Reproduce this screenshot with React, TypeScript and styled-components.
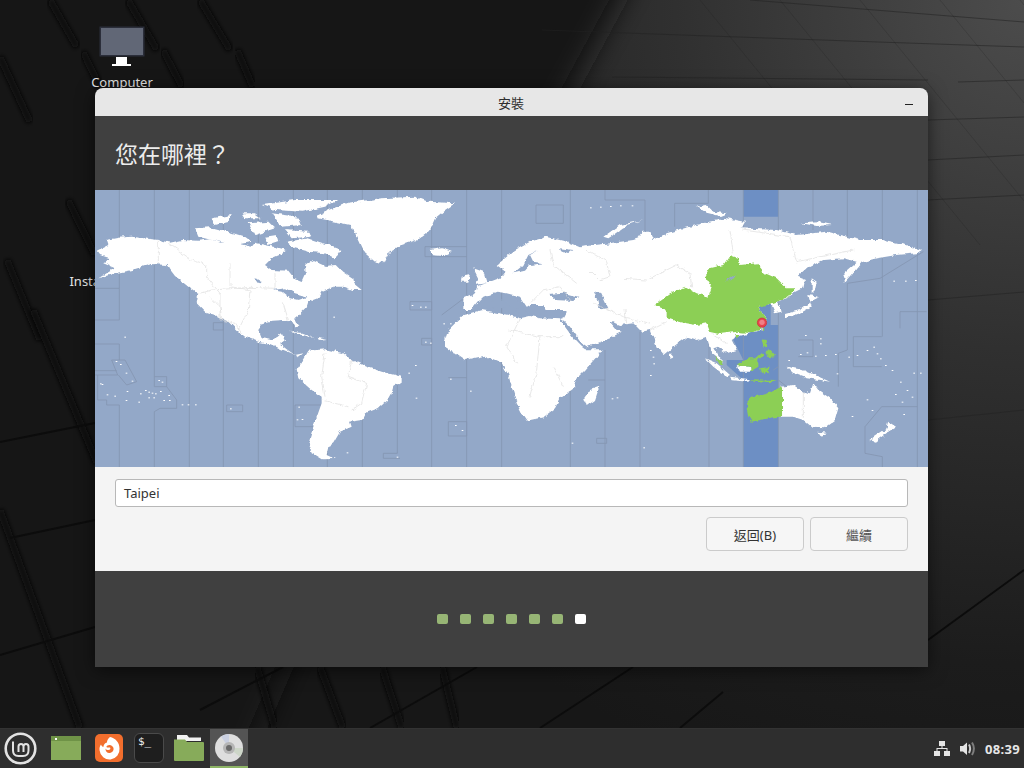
import styled, { createGlobalStyle } from "styled-components";

const GlobalStyle = createGlobalStyle`
  html, body {
    margin: 0;
    height: 100%;
    overflow: hidden;
    background: #111;
    font-family: "Noto Sans", "Noto Sans CJK TC", sans-serif;
  }
`;

const Screen = styled.div`
  display: flex;
  flex-direction: column;
  width: 1024px;
  height: 768px;
`;

const Desktop = styled.div`
  position: relative;
  flex: 1;
  overflow: hidden;
`;

const Wallpaper = styled.svg`
  position: absolute;
  inset: 0;
  display: block;
`;

const DesktopIcon = styled.div<{ $x: number; $y: number }>`
  position: absolute;
  left: ${(p) => p.$x}px;
  top: ${(p) => p.$y}px;
  width: 120px;
  display: flex;
  flex-direction: column;
  align-items: center;
  gap: 7px;
`;

const DesktopLabel = styled.span`
  font-size: 13px;
  line-height: 16px;
  color: #e4e4e4;
  white-space: nowrap;
`;

const Window = styled.div`
  position: absolute;
  left: 95px;
  top: 88px;
  width: 833px;
  height: 579px;
  display: flex;
  flex-direction: column;
  border-radius: 8px 8px 0 0;
  box-shadow: 0 3px 18px rgba(0, 0, 0, 0.55);
`;

const TitleBar = styled.div`
  position: relative;
  height: 28px;
  display: flex;
  align-items: center;
  justify-content: center;
  background: #e7e7e7;
  border-radius: 8px 8px 0 0;
  font-family: "Noto Sans CJK TC", sans-serif;
  font-size: 13px;
  color: #2e2e2e;
  padding-right: 1px;
`;

const MinimizeButton = styled.span`
  position: absolute;
  right: 15px;
  top: 16px;
  width: 8px;
  height: 1px;
  background: #222;
`;

const Header = styled.div`
  height: 74px;
  display: flex;
  align-items: center;
  padding-left: 20px;
  background: #404040;
  font-family: "Noto Sans CJK TC", sans-serif;
  font-size: 23px;
  color: #ececec;
`;

const MapView = styled.svg`
  display: block;
  width: 833px;
  height: 277px;
  flex: none;
`;

const Body = styled.div`
  height: 104px;
  box-sizing: border-box;
  padding: 12px 20px 0;
  display: flex;
  flex-direction: column;
  gap: 10px;
  background: #f4f4f4;
`;

const CityInput = styled.div`
  height: 28px;
  box-sizing: border-box;
  display: flex;
  align-items: center;
  padding: 0 8px;
  background: #fff;
  border: 1px solid #b8b8b8;
  border-radius: 3px;
  font-size: 13px;
  color: #333;
`;

const ButtonRow = styled.div`
  display: flex;
  justify-content: flex-end;
  gap: 6px;
`;

const ActionButton = styled.button<{ $muted?: boolean }>`
  width: 98px;
  height: 34px;
  padding: 0;
  background: #f6f6f6;
  border: 1px solid #cbcbcb;
  border-radius: 4px;
  font-family: "Noto Sans", "Noto Sans CJK TC", sans-serif;
  font-size: 13px;
  color: ${(p) => (p.$muted ? "#555" : "#333")};
`;

const Footer = styled.div`
  flex: 1;
  display: flex;
  align-items: center;
  justify-content: center;
  gap: 12px;
  background: #404040;
`;

const StepDot = styled.span<{ $current?: boolean }>`
  width: 11px;
  height: 10px;
  border-radius: 2px;
  background: ${(p) => (p.$current ? "#fff" : "#97b575")};
`;

const Panel = styled.div`
  height: 40px;
  flex: none;
  box-sizing: border-box;
  display: flex;
  align-items: center;
  background: #2e2e2e;
  border-top: 1px solid #333;
`;

const MenuButton = styled.div`
  width: 47px;
  height: 100%;
  display: flex;
  align-items: center;
  padding-left: 4px;
  box-sizing: border-box;
`;

const Launchers = styled.div`
  height: 100%;
  display: flex;
  gap: 2px;
`;

const Launcher = styled.div<{ $active?: boolean }>`
  width: 38px;
  box-sizing: border-box;
  display: flex;
  align-items: center;
  justify-content: center;
  background: ${(p) => (p.$active ? "#545454" : "transparent")};
  border-bottom: 2px solid ${(p) => (p.$active ? "#8db465" : "transparent")};
  padding-top: 1px;
  &:first-child {
    margin-right: 3px;
  }
`;

const TerminalIcon = styled.div`
  width: 30px;
  height: 30px;
  box-sizing: border-box;
  padding: 2px 0 0 3px;
  background: #1e1e1e;
  border: 1px solid #4a4a4a;
  border-radius: 6px;
  font-family: "DejaVu Sans Mono", monospace;
  font-size: 11px;
  line-height: 12px;
  color: #eee;
`;

const Tray = styled.div`
  margin-left: auto;
  display: flex;
  align-items: center;
  padding-right: 4px;
`;

const Clock = styled.span`
  margin-left: 9px;
  font-size: 13px;
  font-weight: 700;
  letter-spacing: 0.3px;
  color: #e6e6e6;
`;

const SHADOWS = [
  [50, 0, 77, 47], [128, 0, 157, 50], [200, 0, 230, 50], [0, 57, 30, 122],
  [83, 52, 100, 87], [163, 50, 182, 87], [237, 50, 253, 87], [7, 260, 40, 340],
  [33, 310, 97, 463], [0, 510, 80, 728], [68, 200, 95, 255], [257, 667, 275, 728],
  [320, 667, 343, 728], [382, 667, 402, 728], [442, 667, 457, 728],
];

const THIN_SHADOWS = [
  [0, 442, 95, 423], [10, 538, 95, 520], [0, 655, 95, 627], [200, 710, 283, 667],
  [370, 728, 477, 667], [540, 728, 633, 667], [680, 728, 723, 692],
  [928, 640, 1024, 570],
];

const FAINT_LINES = [
  [542, 30, 878, 42], [878, 42, 1024, 47], [612, 77, 928, 80], [958, 82, 1024, 80],
  [928, 120, 1024, 117], [928, 160, 1024, 155], [928, 200, 1024, 195],
  [750, 0, 1024, 22], [928, 300, 1024, 292], [928, 420, 1024, 410],
];

const TZ_WEST = [
  "M73 0V295H0M0 390H73V295M0 462H73V510H50L68 555H0M0 542H65M73 510H90L125 575 95 585 70 555M8 555V630H35V645H73V831",
  "M178 0V560H215V590L245 630V655H195L178 665V831M178 560V590H215",
  "M283 0V831M385 0V831M355 398H385V420H355ZM395 645H443V665H395Z",
  "M490 0V831M595 0V831M600 645H680V710H600ZM697 0V831M802 0V831",
  "M907 0V790H865V805H915M1010 0V831M945 335H1010V360H945ZM980 445H1010V465H980Z",
  "M1115 0V831M1115 170H990V200H1115M1060 563H1115M1060 695H1115V738H1060ZM1040 375L1100 330H1115M1220 0V831",
];

const TZ_EAST = [
  "M78 45V100H160V45H78M181 0V831M285 0V30H405V125M285 480V831M390 425V831",
  "M494 40H595V0M494 40V110M597 460V831M700 0V831M805 0V831",
  "M909 0V120M1012 0V200M1012 280V480L985 490V590M1012 280L1110 265 1240 185",
  "M1115 440H1030V530H1115M1170 365H1250M1170 365V415M865 450H909V500H865M1065 710L1115 650H1222M1065 710V790L1117 800V831M1117 0V440M1222 0V831",
  "M790 540L805 530M805 570L830 590M235 570H285M260 745H290V760H260Z",
];

const LAND_WEST = [
  "5,182 40,165 35,150 70,143 110,140 190,150 225,158 262,150 310,152 345,148 380,158 420,158 450,165 470,170 480,158 510,165 545,172 575,180 560,192 530,205 510,225 530,240 580,242 600,268 620,276 632,250 630,225 650,210 690,228 725,225 745,245 775,265 778,282 800,300 770,300 745,290 715,290 680,305 668,325 640,335 635,350 610,375 598,385 610,410 600,412 590,395 565,390 530,392 505,398 490,420 500,445 530,450 548,440 560,430 570,450 555,462 575,478 600,495 625,490 610,502 590,490 560,478 525,462 490,455 450,440 425,420 400,395 360,375 330,365 305,340 310,312 280,290 240,258 215,225 170,222 110,240 60,250 10,265 60,235 25,220 45,205 15,195",
  "575,155 640,145 700,165 740,180 720,205 690,190 640,185 600,175",
  "300,115 345,112 400,125 450,140 470,155 420,165 350,150 310,140",
  "350,85 410,75 400,95 360,105",
  "440,70 480,70 500,85 450,85",
  "460,100 520,95 540,115 480,135",
  "500,45 600,30 730,30 690,50 620,65 540,60",
  "530,70 610,80 620,105 560,110",
  "510,140 545,135 550,155 520,165",
  "570,120 640,125 650,140 590,145",
  "670,75 700,60 760,38 860,25 960,20 1000,35 1080,40 1050,60 1020,85 1005,120 965,150 920,165 880,190 865,220 840,215 810,190 785,135 765,105 720,95 670,85",
  "1005,180 1040,175 1070,185 1045,198 1015,196",
  "580,425 620,428 660,445 620,435",
  "665,440 695,447 670,450",
  "640,482 690,478 745,490 770,510 815,530 860,545 920,560 920,575 895,590 885,625 850,655 810,670 800,690 765,695 770,710 735,725 715,760 700,770 695,795 720,807 680,808 650,790 640,760 655,710 680,640 680,620 650,600 610,565 605,540 625,510",
];

const LAKES_WEST = [
  "530,300 570,295 600,310 640,320 610,330 585,325 560,305",
  "478,262 490,265 500,280 490,278",
];

const BORDERS_WEST =
  "M190 150V222M310 312L350 300 465 292 540 295M345 320L375 350 380 390 420 400 440 430M405 220V290L465 300 460 360 430 420M540 295V250M565 340L580 390M690 490L680 560 690 620M770 510L760 560 815 580 800 640 770 660M680 630L760 650M220 160L290 210 335 225V260L375 310V390M1110 410L1190 440 1195 470 1180 500";

const LAND_EAST = [
  "-140,325 -105,310 -100,290 -60,275 -25,262 -10,240 -5,252 -40,225 15,180 60,155 110,140 170,155 210,172 230,168 300,160 370,150 385,145 400,125 420,125 430,150 470,130 520,115 600,95 650,85 705,95 695,115 800,120 860,135 950,125 1050,150 1120,150 1190,165 1235,180 1220,190 1160,195 1100,205 1060,215 1030,250 1005,278 1000,250 1040,215 1000,205 940,210 890,235 860,260 885,270 880,295 850,310 830,325 800,335 810,350 815,365 795,370 785,345 760,340 745,350 760,375 770,395 750,420 720,430 680,440 665,450 680,480 650,490 625,470 610,475 640,520 605,490 590,440 560,450 530,440 490,470 460,495 440,470 420,420 395,425 370,400 330,405 300,395 320,420 335,425 300,445 230,472 220,465 175,405 150,385 170,360 110,360 100,345 60,345 50,350 30,320 -10,310 -40,305 -80,320 -95,335 -115,360 -140,360",
  "-195,450 -185,420 -140,375 -85,360 -5,375 30,385 60,378 90,385 150,388 165,410 190,445 215,470 225,478 275,478 260,500 225,540 195,570 198,590 150,625 135,655 100,682 50,692 35,670 20,640 5,590 -5,555 -25,518 -75,497 -135,510 -165,490 -195,470",
  "268,590 255,630 230,648 222,625 240,600",
  "-110,235 -80,245 -70,280 -105,285 -95,265",
  "-145,260 -120,255 -125,275 -147,275",
  "280,140 330,105 400,90 350,105 310,135 295,145",
  "560,50 590,45 610,65 650,70 630,78 590,68",
  "875,100 925,97 965,105 920,108",
  "905,265 920,275 915,300 905,310",
  "895,315 930,320 900,335",
  "900,335 905,350 870,370 825,385 825,372 870,360",
  "480,490 490,500 480,503",
  "585,505 620,520 660,555 650,560 610,530",
  "660,560 720,568 715,572 665,568",
  "680,525 720,530 725,545 690,545",
  "830,530 880,540 960,575 930,570 890,565 850,550",
  "815,590 850,585 880,605 900,610 910,580 925,600 960,625 985,655 975,690 945,712 905,710 880,690 850,680 815,680",
  "925,725 950,728 935,740",
  "1135,695 1150,705 1158,710 1135,725 1095,755 1078,750 1115,725 1130,715",
];

const SEAS_EAST = [
  "10,250 45,242 60,225 100,220 70,215 60,195 82,182 55,195 40,225",
  "150,175 190,180 175,192 155,188",
  "115,312 160,308 205,320 190,333 135,330",
  "0,352 45,358 60,375 110,366 170,366 160,385 90,382 30,372",
  "-80,332 -15,328 0,352 -60,358 -88,352",
  "252,305 272,305 295,355 268,358 262,330",
  "12,312 42,338 38,343 8,320",
  "150,390 162,392 220,465 205,458",
  "300,395 330,405 345,410 322,418",
];

const GREEN_EAST = [
  "432,345 480,310 525,290 560,310 595,320 605,290 585,260 600,235 640,225 660,195 685,205 690,225 740,220 765,250 800,265 830,295 855,295 835,320 800,335 770,345 745,350 760,375 770,395 745,420 720,430 680,425 630,432 600,425 590,400 560,405 505,395 470,385 470,360",
  "675,435 690,435 680,445",
  "755,415 765,418 757,428",
  "755,448 770,450 772,470 760,472",
  "765,482 782,480 798,498 778,502",
  "738,505 755,490 762,495 745,510",
  "680,525 715,505 745,505 745,530 720,545 722,530",
  "750,535 780,530 772,540 782,552 765,548 760,556",
  "615,500 640,520 630,525",
  "720,568 800,570 780,576 730,572",
  "808,595 816,592 816,680 790,682 725,695 715,680 708,640 725,620 770,612",
];

const BORDERS_EAST =
  "M60 340L100 300 150 290 180 330M340 265L410 270 500 225 540 250 545 295M230 180L290 215 300 260 270 270 240 240M120 180L130 225 200 280M250 340L340 380 420 400M345 360L350 400M420 420L470 395M600 425L650 460M815 590V680M880 605V680M840 140L860 220M660 120L670 190M860 215L1030 180M-5 420L90 440 80 540 60 620M90 440L160 440M30 385L-10 470 20 520M130 530L160 590M700 120L840 140";

const PACIFIC_DOTS = [
  [15, 580], [20, 582], [35, 613], [58, 617], [62, 513], [75, 522], [92, 548], [110, 572], [95, 603], [92, 630],
  [130, 635], [135, 610], [150, 600], [160, 605], [170, 608], [180, 610], [195, 603], [160, 622], [175, 622], [205, 630],
  [220, 615], [222, 630], [190, 570], [200, 575], [260, 643], [278, 643], [300, 643], [88, 440], [405, 655], [610, 650],
  [605, 688], [620, 687], [950, 345], [975, 350], [990, 350], [1045, 400], [1065, 400], [990, 455], [1005, 458], [960, 525],
  [940, 548], [962, 623], [1065, 566], [1125, 602], [1080, 705], [1100, 720], [755, 787], [905, 800], [715, 380],
];

const EAST_DOTS = [
  [420, 480], [428, 500], [430, 520], [420, 555], [305, 625], [320, 622], [885, 435], [930, 445], [930, 460], [870, 492],
  [890, 487], [915, 497], [945, 495], [975, 492], [1015, 500], [1040, 495], [1070, 480], [1090, 470], [1100, 490], [1110, 505],
  [1125, 525], [1145, 540], [1170, 575], [1210, 548], [1230, 548], [1190, 600], [1205, 620], [1175, 635], [1155, 612], [1070, 628],
  [1085, 660], [1025, 678], [1180, 672], [185, 758], [400, 772], [240, 52], [270, 50], [300, 48], [330, 46], [365, 46],
  [1150, 272], [1185, 272], [1215, 270], [835, 510], [980, 550],
];

const SEA = "#93a8c8";
const ZONE_LINE = "#8495b1";

const WorldMap = () => (
  <MapView viewBox="0 0 2499 831" preserveAspectRatio="none">
    <defs>
      {/* roughens the hand-traced coastlines */}
      <filter id="coast" x="-5%" y="-5%" width="110%" height="110%">
        <feTurbulence type="fractalNoise" baseFrequency="0.055" numOctaves="3" seed="4" result="noise" />
        <feDisplacementMap in="SourceGraphic" in2="noise" scale="14" xChannelSelector="R" yChannelSelector="G" />
        <feGaussianBlur stdDeviation="1.1" />
      </filter>
    </defs>
    <rect width="2499" height="831" fill={SEA} />
    <g transform="translate(1245 0)">
      <path
        d="M700 0H805V80H700ZM750 340H782V405H805V831H700V570L650 525V510H700L670 450 680 430Z"
        fill="#6d8fc4"
      />
    </g>
    <path d={TZ_WEST.join("")} fill="none" stroke={ZONE_LINE} strokeWidth="2.5" />
    <path d={TZ_EAST.join("")} fill="none" stroke={ZONE_LINE} strokeWidth="2.5" transform="translate(1245 0)" />
    <g filter="url(#coast)">
      {LAND_WEST.map((points) => (
        <polygon key={points} points={points} fill="#fff" />
      ))}
      {LAKES_WEST.map((points) => (
        <polygon key={points} points={points} fill={SEA} />
      ))}
      <path d={BORDERS_WEST} fill="none" stroke="#dcdcdc" strokeWidth="2" />
      <g transform="translate(1245 0)">
        {LAND_EAST.map((points) => (
          <polygon key={points} points={points} fill="#fff" />
        ))}
        {SEAS_EAST.map((points) => (
          <polygon key={points} points={points} fill={SEA} />
        ))}
        <path d={BORDERS_EAST} fill="none" stroke="#dcdcdc" strokeWidth="2" />
        {GREEN_EAST.map((points) => (
          <polygon key={points} points={points} fill="#8ccf55" />
        ))}
        <polygon points="645,275 680,250 665,270" fill={SEA} />
      </g>
    </g>
    {PACIFIC_DOTS.map(([x, y]) => (
      <rect key={`${x}-${y}`} x={x} y={y} width="5" height="3" fill="#fff" />
    ))}
    <g transform="translate(1245 0)">
      {EAST_DOTS.map(([x, y]) => (
        <rect key={`${x}-${y}`} x={x} y={y} width="5" height="3" fill="#fff" />
      ))}
      <rect x="754" y="408" width="5" height="14" fill="#c9c9c9" />
      <circle cx="756" cy="398" r="14" fill="#e8434c" stroke="#c9323a" strokeWidth="2" />
      <ellipse cx="756" cy="397" rx="8" ry="8" fill="#f27f86" />
    </g>
  </MapView>
);

const ComputerIcon = () => (
  <svg width="46" height="41" viewBox="0 0 46 41">
    <rect x="0.5" y="0.5" width="45" height="30" fill="#2b2e3a" />
    <rect x="2" y="2" width="42" height="27" fill="#616776" />
    <rect x="17" y="31" width="11" height="7" fill="#fff" />
    <rect x="13" y="38" width="19" height="2" fill="#fff" />
  </svg>
);

const MintLogo = () => (
  <svg width="33" height="33" viewBox="0 0 33 33" fill="none" stroke="#e2e2e2">
    <circle cx="16.5" cy="16.5" r="14.8" strokeWidth="2.6" />
    <path
      d="M9 9.5V18.5Q9 24 14.5 24H19Q24.5 24 24.5 18.5V14.5Q24.5 12 22 12T19.5 14.5V20M19.5 14.5Q19.5 12 17 12T14.5 14.5V20"
      strokeWidth="2"
    />
  </svg>
);

const WindowFolderIcon = () => (
  <svg width="30" height="24" viewBox="0 0 30 24">
    <rect width="30" height="24" fill="#87ab5a" />
    <rect width="30" height="5" fill="#6f9347" />
    <rect x="4" y="2" width="2" height="2" fill="#fff" />
  </svg>
);

const FirefoxIcon = () => (
  <svg width="28" height="28" viewBox="0 0 28 28">
    <rect width="28" height="28" rx="5" fill="#f26e2d" />
    <path
      d="M15 3C20.5 4 24.5 8.5 24.5 14.5A10 10 0 0 1 4.6 16.5C4.2 14 4.8 12 6 10.5C6.5 12 7.5 12.8 8.5 12.8C8.5 10.5 10 9 12 8.5C11.8 6.8 13 4.5 15 3Z"
      fill="#fff"
    />
    <path
      d="M12.5 11.5C11.5 12 11 13 12 13.5H15C16 14.5 15 16 13.5 16C12 16 11 15.5 10.5 14.5C10.2 17.5 12.5 19.5 15 19C17.5 18.5 19 16.5 18.5 14C18 11.8 15 10 12.5 11.5Z"
      fill="#f26e2d"
    />
  </svg>
);

const FolderIcon = () => (
  <svg width="30" height="26" viewBox="0 0 30 26">
    <path d="M3 0H13L15 2.5H27V6H3Z" fill="#f2f2f2" />
    <path d="M0 4.5H11L13 7H29Q30 7 30 8V25Q30 26 29 26H1Q0 26 0 25V5Q0 4.5 0 4.5Z" fill="#87ab5a" />
  </svg>
);

const DiscIcon = () => (
  <svg width="28" height="28" viewBox="0 0 28 28">
    <circle cx="14" cy="14" r="14" fill="#dedede" />
    <path d="M14 14L6 2.5A14 14 0 0 1 14 0Z" fill="#c9cfe0" />
    <path d="M14 14L28 14A14 14 0 0 1 25 23Z" fill="#cdd6c8" />
    <circle cx="14" cy="14" r="6" fill="#b5b5b5" />
    <circle cx="14" cy="14" r="3" fill="#6a6a6a" />
  </svg>
);

const NetworkIcon = () => (
  <svg width="16" height="16" viewBox="0 0 16 16" fill="#e4e4e4">
    <rect x="5" y="0" width="6" height="5" />
    <rect x="0" y="10" width="6" height="5" />
    <rect x="10" y="10" width="6" height="5" />
    <path d="M7.5 5H8.5V7H13.5V10H12.5V8H3.5V10H2.5V7H7.5Z" />
  </svg>
);

const VolumeIcon = () => (
  <svg width="16" height="16" viewBox="0 0 16 16" fill="none" style={{ marginLeft: 10 }}>
    <path d="M0 5H3L7 1.5V14L3 10.5H0Z" fill="#e4e4e4" />
    <path d="M9 3.5Q11.2 7.5 9 12" stroke="#c8c8c8" strokeWidth="2" />
    <path d="M12 1.5Q15.8 7.5 12 14" stroke="#7e7e7e" strokeWidth="2" />
  </svg>
);

const App = () => {
  const steps = [0, 1, 2, 3, 4, 5, 6];
  return (
    <>
      <GlobalStyle />
      <Screen>
        <Desktop>
          <Wallpaper width="1024" height="728" viewBox="0 0 1024 728">
            <defs>
              <radialGradient id="glow" gradientUnits="userSpaceOnUse" cx="1024" cy="0" r="830">
                <stop offset="0" stopColor="#4c4c4c" />
                <stop offset="0.42" stopColor="#303030" />
                <stop offset="0.8" stopColor="#1c1c1c" />
                <stop offset="1" stopColor="#171717" />
              </radialGradient>
              <filter id="soft">
                <feGaussianBlur stdDeviation="14" />
              </filter>
              <filter id="edge">
                <feGaussianBlur stdDeviation="2" />
              </filter>
            </defs>
            <rect width="1024" height="728" fill="url(#glow)" />
            <polygon
              points="-40,-40 640,-40 570,90 400,400 240,770 -40,770"
              fill="#131313"
              filter="url(#soft)"
            />
            {SHADOWS.map(([x1, y1, x2, y2]) => (
              <line key={`${x1}-${y1}`} x1={x1} y1={y1} x2={x2} y2={y2} stroke="#090909" strokeWidth="7" filter="url(#edge)" />
            ))}
            {THIN_SHADOWS.map(([x1, y1, x2, y2]) => (
              <line key={`${x1}-${y1}`} x1={x1} y1={y1} x2={x2} y2={y2} stroke="#0c0c0c" strokeWidth="2" />
            ))}
            {FAINT_LINES.map(([x1, y1, x2, y2]) => (
              <line key={`${x1}-${y1}`} x1={x1} y1={y1} x2={x2} y2={y2} stroke="#222" strokeOpacity="0.55" />
            ))}
            {[700, 780, 860, 940, 1020, 1100, 1180].map((x) => (
              <line key={x} x1={x} y1={0} x2={x + 200} y2={245} stroke="#222" strokeOpacity="0.22" />
            ))}
          </Wallpaper>
          <DesktopIcon $x={62} $y={26}>
            <ComputerIcon />
            <DesktopLabel>Computer</DesktopLabel>
          </DesktopIcon>
          <DesktopIcon $x={62} $y={273}>
            <DesktopLabel>Install Linux Mint</DesktopLabel>
          </DesktopIcon>
          <Window>
            <TitleBar>
              安裝
              <MinimizeButton />
            </TitleBar>
            <Header>您在哪裡？</Header>
            <WorldMap />
            <Body>
              <CityInput>Taipei</CityInput>
              <ButtonRow>
                <ActionButton>返回(B)</ActionButton>
                <ActionButton $muted>繼續</ActionButton>
              </ButtonRow>
            </Body>
            <Footer>
              {steps.map((step) => (
                <StepDot key={step} $current={step === 6} />
              ))}
            </Footer>
          </Window>
        </Desktop>
        <Panel>
          <MenuButton>
            <MintLogo />
          </MenuButton>
          <Launchers>
            <Launcher><WindowFolderIcon /></Launcher>
            <Launcher><FirefoxIcon /></Launcher>
            <Launcher><TerminalIcon>$_</TerminalIcon></Launcher>
            <Launcher><FolderIcon /></Launcher>
            <Launcher $active><DiscIcon /></Launcher>
          </Launchers>
          <Tray>
            <NetworkIcon />
            <VolumeIcon />
            <Clock>08:39</Clock>
          </Tray>
        </Panel>
      </Screen>
    </>
  );
};

export default App;
